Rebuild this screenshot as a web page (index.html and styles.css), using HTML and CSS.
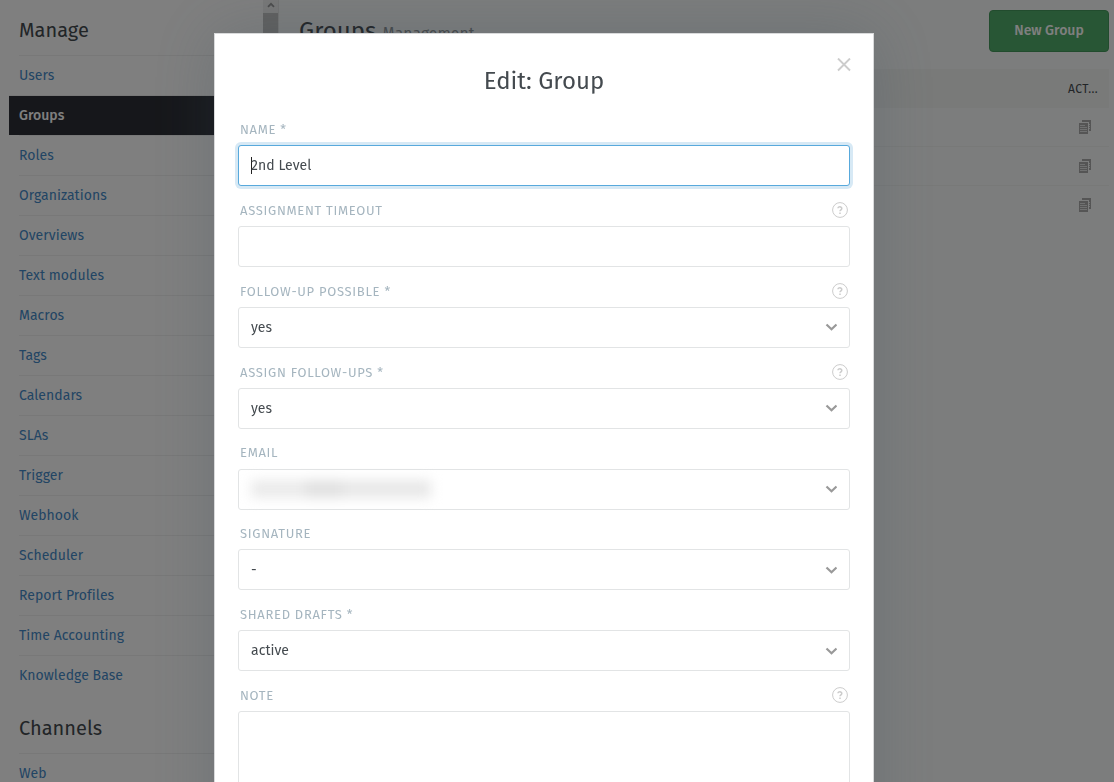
FILE: index.html
```html
<!DOCTYPE html>
<html lang="en">
<head>
<meta charset="utf-8">
<title>Edit: Group</title>
<link rel="stylesheet" href="styles.css">
</head>
<body>
<svg class="defs" width="0" height="0">
  <symbol id="help" viewBox="0 0 16 16"><circle cx="8" cy="8" r="7.4" fill="none" stroke="currentColor" stroke-width="1"/><path d="M6 6.3C6 4.3 9.9 4.4 9.8 6.5C9.8 7.8 8 7.8 8 9.3M8 10.6V12" fill="none" stroke="currentColor" stroke-width="1.5"/></symbol>
  <symbol id="arrow" viewBox="0 0 12 8"><path d="M1.5 1.5L6.5 6.3L11.5 1.5" fill="none" stroke="currentColor" stroke-width="2.2"/></symbol>
  <symbol id="copy" viewBox="0 0 12 14"><path d="M3 0H12V11H10V2H3Z" fill="currentColor"/><path d="M0 3H9V14H0Z" fill="currentColor"/><path d="M1 5.5H6M1 7.5H8M1 9.5H8M1 11.5H8" stroke="#f9fbfa" stroke-width=".7"/><path d="M10 4.5H11M10 6.5H11M10 8.5H11" stroke="#f9fbfa" stroke-width=".8"/></symbol>
</svg>
<div class="app">
  <nav class="sidebar">
    <h2 class="nav-title">Manage</h2>
    <ul class="nav-list">
      <li class="nav-item"><a>Users</a></li>
      <li class="nav-item active"><a>Groups</a></li>
      <li class="nav-item"><a>Roles</a></li>
      <li class="nav-item"><a>Organizations</a></li>
      <li class="nav-item"><a>Overviews</a></li>
      <li class="nav-item"><a>Text modules</a></li>
      <li class="nav-item"><a>Macros</a></li>
      <li class="nav-item"><a>Tags</a></li>
      <li class="nav-item"><a>Calendars</a></li>
      <li class="nav-item"><a>SLAs</a></li>
      <li class="nav-item"><a>Trigger</a></li>
      <li class="nav-item"><a>Webhook</a></li>
      <li class="nav-item"><a>Scheduler</a></li>
      <li class="nav-item"><a>Report Profiles</a></li>
      <li class="nav-item"><a>Time Accounting</a></li>
      <li class="nav-item"><a>Knowledge Base</a></li>
    </ul>
    <h2 class="nav-title second">Channels</h2>
    <ul class="nav-list">
      <li class="nav-item"><a>Web</a></li>
    </ul>
  </nav>
  <div class="scrollbar">
    <div class="scroll-up"><svg width="8" height="6" viewBox="0 0 8 6"><path d="M1 4.8L4 1.8L7 4.8" fill="none" stroke="#999" stroke-width="1.8"/></svg></div>
    <div class="scroll-thumb"></div>
  </div>
  <main class="main">
    <header class="page-header">
      <h1 class="page-title">Groups <small>Management</small></h1>
      <button class="new-button">New Group</button>
    </header>
    <div class="table">
      <div class="table-head">ACT...</div>
      <div class="table-row"><svg class="copy"><use href="#copy"/></svg></div>
      <div class="table-row"><svg class="copy"><use href="#copy"/></svg></div>
      <div class="table-row last"><svg class="copy"><use href="#copy"/></svg></div>
    </div>
  </main>
</div>
<div class="backdrop">
  <section class="modal">
    <svg class="close" viewBox="0 0 14 14"><path d="M1 .5L13 12.5M13 .5L1 12.5" stroke="#ccc" stroke-width="1.9"/></svg>
    <h1 class="modal-title">Edit: Group</h1>
    <form class="form">
      <div class="field"><div class="label"><span>NAME *</span></div><div class="control focused"><i class="caret"></i><span>2nd Level</span></div></div>
      <div class="field"><div class="label"><span>ASSIGNMENT TIMEOUT</span><svg class="help"><use href="#help"/></svg></div><div class="control"></div></div>
      <div class="field"><div class="label"><span>FOLLOW-UP POSSIBLE *</span><svg class="help"><use href="#help"/></svg></div><div class="control select"><span>yes</span><svg class="arrow"><use href="#arrow"/></svg></div></div>
      <div class="field"><div class="label"><span>ASSIGN FOLLOW-UPS *</span><svg class="help"><use href="#help"/></svg></div><div class="control select"><span>yes</span><svg class="arrow"><use href="#arrow"/></svg></div></div>
      <div class="field"><div class="label"><span>EMAIL</span></div><div class="control select"><div class="redacted"><i class="smudge s1"></i><i class="smudge s2"></i><i class="smudge s3"></i></div><svg class="arrow"><use href="#arrow"/></svg></div></div>
      <div class="field"><div class="label"><span>SIGNATURE</span></div><div class="control select"><span>-</span><svg class="arrow"><use href="#arrow"/></svg></div></div>
      <div class="field"><div class="label"><span>SHARED DRAFTS *</span></div><div class="control select"><span>active</span><svg class="arrow"><use href="#arrow"/></svg></div></div>
      <div class="field"><div class="label"><span>NOTE</span><svg class="help"><use href="#help"/></svg></div><div class="control textarea"></div></div>
    </form>
  </section>
</div>
</body>
</html>
```
FILE: styles.css
```css
* { box-sizing: border-box; }
body { margin: 0; height: 782px; overflow: hidden; font-family: "Fira Sans", "Open Sans", sans-serif; font-size: 14px; color: #444a4f; }
h1, h2, ul { margin: 0; padding: 0; font-weight: 400; }
.defs { display: block; }
.app { display: flex; height: 782px; overflow: hidden; background: #f9fbfa; }

.sidebar { width: 263px; flex: none; padding-left: 9px; background: #fff; }
.nav-title { height: 55px; padding: 16px 10px 0; font-size: 20px; line-height: 28px; color: #444a4f; }
.nav-title.second { height: 58px; padding-top: 19px; }
.nav-list { list-style: none; }
.nav-item { height: 40px; padding-left: 10px; line-height: 39px; letter-spacing: .05px; color: #458ac8; }
.nav-item a { display: block; height: 40px; border-top: 1px solid #f0f0f0; }
.nav-item.active { padding-left: 0; color: #fff; font-weight: 500; letter-spacing: 0; }
.nav-item.active a { padding-left: 10px; background: #2d2f36; background-clip: padding-box; }

.scrollbar { width: 15px; flex: none; background: #f1f1f1; }
.scroll-up { display: flex; justify-content: center; height: 13px; padding-top: 2px; }
.scroll-thumb { height: 400px; background: #c1c1c1; }

.main { flex: 1; padding: 10px 5px 0 20px; border-left: 1px solid #e6e6e6; }
.page-header { display: flex; justify-content: space-between; height: 59px; }
.page-title { padding-top: 4px; font-size: 24px; line-height: 34px; }
.page-title small { font-size: 15.6px; letter-spacing: .08px; color: #8d9498; }
.new-button { width: 120px; height: 42px; padding: 0 0 2px; border: 1px solid #44995c; border-radius: 4px; background: #51ad6a; color: #fff; font: 500 14px "Fira Sans", "Open Sans", sans-serif; letter-spacing: 0; }
.table-head { height: 39px; padding-right: 11px; background: #f2f4f3; text-align: right; font-size: 12px; line-height: 40px; letter-spacing: .4px; }
.table-row { display: flex; justify-content: flex-end; height: 39px; padding: 12px 18px 0 0; border-bottom: 1px solid #f0f2f1; }
.table-row.last { border-bottom: 0; }
.copy { width: 12px; height: 14px; color: #aaa; }

.backdrop { position: fixed; inset: 0; display: flex; justify-content: center; align-items: flex-start; padding: 33px 26px 0 0; background: rgba(0, 0, 0, .5); overflow: hidden; }
.modal { position: relative; flex: none; width: 660px; height: 840px; padding: 0 23px; border: 1px solid #d9dadb; background: #fff; box-shadow: 0 0 60px rgba(60, 78, 92, .25); }
.modal-title { height: 76px; padding-top: 30px; font-size: 24px; line-height: 34px; text-align: center; }
.close { position: absolute; top: 24px; right: 22.5px; width: 14px; height: 14px; }
.field { height: 80.83px; }
.label { display: flex; align-items: center; justify-content: space-between; height: 35.25px; padding: 4px 2px 0; font-size: 13px; letter-spacing: .69px; color: #a5b5bf; }
.help { width: 16px; height: 16px; color: #ccc; }
.control { display: flex; align-items: center; height: 41px; padding: 0 12px; border: 1px solid #e2e4e5; border-radius: 3px; background: #fff; letter-spacing: .04px; color: #444a4f; }
.control.focused { border-color: #58a9dc; box-shadow: 0 0 0 3px #d7e9f5; }
.select { justify-content: space-between; }
.arrow { width: 12px; height: 8px; color: #999; }
.caret { width: 1px; height: 17px; margin-right: -1px; background: #222; }
.control.textarea { height: 120px; }
.redacted { display: flex; align-items: center; width: 188px; filter: blur(6px); }
.smudge { height: 18px; background: #ebebeb; }
.s1 { width: 54px; }
.s2 { width: 38px; background: #e1e1e1; }
.s3 { width: 88px; background: #e8e8e8; }
```
